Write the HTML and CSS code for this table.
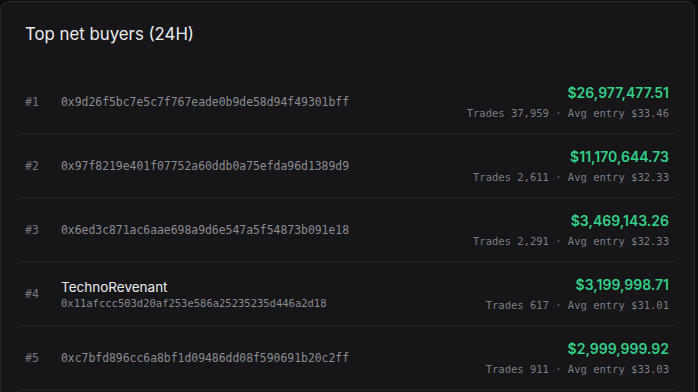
FILE: index.html
```html
<!DOCTYPE html>
<html>
<head>
<meta charset="utf-8">
<title>Top net buyers</title>
<link rel="stylesheet" href="styles.css">
</head>
<body>
    <div class="buyers-card">
        <div class="buyers-title">Top net buyers (24H)</div>

        <div class="buyers-list">
            <div class="buyer-row">
                <span class="buyer-rank">#1</span>
                <div class="buyer-who">
                    <span class="buyer-address">0x9d26f5bc7e5c7f767eade0b9de58d94f49301bff</span>
                </div>
                <div class="buyer-stats">
                    <span class="buyer-amount">$26,977,477.51</span>
                    <span class="buyer-meta">Trades 37,959 · Avg entry $33.46</span>
                </div>
            </div>

            <div class="buyer-row">
                <span class="buyer-rank">#2</span>
                <div class="buyer-who">
                    <span class="buyer-address">0x97f8219e401f07752a60ddb0a75efda96d1389d9</span>
                </div>
                <div class="buyer-stats">
                    <span class="buyer-amount">$11,170,644.73</span>
                    <span class="buyer-meta">Trades 2,611 · Avg entry $32.33</span>
                </div>
            </div>

            <div class="buyer-row">
                <span class="buyer-rank">#3</span>
                <div class="buyer-who">
                    <span class="buyer-address">0x6ed3c871ac6aae698a9d6e547a5f54873b091e18</span>
                </div>
                <div class="buyer-stats">
                    <span class="buyer-amount">$3,469,143.26</span>
                    <span class="buyer-meta">Trades 2,291 · Avg entry $32.33</span>
                </div>
            </div>

            <div class="buyer-row">
                <span class="buyer-rank">#4</span>
                <div class="buyer-who">
                    <span class="buyer-name">TechnoRevenant</span>
                    <span class="buyer-address small">0x11afccc503d20af253e586a25235235d446a2d18</span>
                </div>
                <div class="buyer-stats">
                    <span class="buyer-amount">$3,199,998.71</span>
                    <span class="buyer-meta">Trades 617 · Avg entry $31.01</span>
                </div>
            </div>

            <div class="buyer-row">
                <span class="buyer-rank">#5</span>
                <div class="buyer-who">
                    <span class="buyer-address">0xc7bfd896cc6a8bf1d09486dd08f590691b20c2ff</span>
                </div>
                <div class="buyer-stats">
                    <span class="buyer-amount">$2,999,999.92</span>
                    <span class="buyer-meta">Trades 911 · Avg entry $33.03</span>
                </div>
            </div>
        </div>
    </div>
</body>
</html>
```

FILE: styles.css
```css
body {
    margin: 0;
    background: #0b0b0c;
    font-family: Inter, "Noto Sans", sans-serif;
}

.buyers-card {
    margin: 1px 3px 0 0;
    height: 420px;
    background: #161618;
    border: 1px solid #27272a;
    border-radius: 8px;
    padding: 0 16px;
}

.buyers-title {
    padding: 20px 8px 0;
    height: 48px;
    font-size: 16.8px;
    line-height: 24px;
    color: #ececec;
}

.buyer-row {
    display: flex;
    align-items: center;
    height: 63px;
    padding: 0 8px;
    border-bottom: 1px solid #262629;
    border-radius: 6px;
}

.buyer-rank {
    width: 36px;
    font-family: "DejaVu Sans Mono", monospace;
    font-size: 11.5px;
    color: #77777c;
}

.buyer-who {
    flex: 1;
    display: flex;
    flex-direction: column;
}

.buyer-name {
    font-size: 13.5px;
    line-height: 18px;
    color: #ececec;
}

.buyer-address {
    font-family: "DejaVu Sans Mono", monospace;
    font-size: 11.4px;
    color: #8c8c91;
}

.buyer-address.small {
    font-size: 10.5px;
    line-height: 14px;
}

.buyer-stats {
    display: flex;
    flex-direction: column;
    align-items: flex-end;
    gap: 4px;
    padding-right: 1px;
}

.buyer-amount {
    font-size: 14px;
    font-weight: 600;
    line-height: 18px;
    color: #34d08a;
}

.buyer-meta {
    font-family: "DejaVu Sans Mono", monospace;
    font-size: 10.5px;
    line-height: 14px;
    color: #7d7d82;
}
```
